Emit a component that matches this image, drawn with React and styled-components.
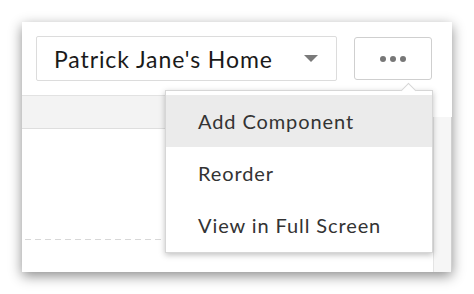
import React from 'react';
import styled, { createGlobalStyle } from 'styled-components';

const GlobalStyle = createGlobalStyle`
    html, body {
        margin: 0;
        padding: 0;
        background: #ffffff;
    }

    body {
        font-family: Lato, "Liberation Sans", sans-serif;
    }
`;

const Page = styled.div`
    width: 474px;
    height: 294px;
    padding: 22px;
    box-sizing: border-box;
    background: #ffffff;
`;

const Panel = styled.div`
    position: relative;
    width: 430px;
    height: 250px;
    display: flex;
    flex-direction: column;
    background: #ffffff;
    box-shadow: 0px 4px 12px rgba(0, 0, 0, 0.45);
`;

const Header = styled.div`
    display: flex;
    align-items: center;
    gap: 17px;
    height: 73px;
    padding: 0 20px 0 14px;
    box-sizing: border-box;
`;

const Select = styled.div`
    display: flex;
    align-items: center;
    justify-content: space-between;
    width: 301px;
    height: 45px;
    padding: 0 18px 0 17px;
    box-sizing: border-box;
    border: 1px solid #dcdcdc;
    border-radius: 2px;
    background: #ffffff;

    font-size: 23px;
    letter-spacing: 0.9px;
    color: #1a1a1a;
`;

const Caret = styled.span`
    width: 0;
    height: 0;
    border-left: 7px solid transparent;
    border-right: 7px solid transparent;
    border-top: 7px solid #7a7a7a;
`;

const MoreButton = styled.div`
    display: flex;
    align-items: center;
    justify-content: center;
    gap: 4px;
    width: 78px;
    height: 43px;
    box-sizing: border-box;
    border: 1px solid #cfcfcf;
    border-radius: 3px;
    background: #ffffff;
`;

const Dot = styled.span`
    width: 6px;
    height: 6px;
    border-radius: 50%;
    background: #777777;
`;

const Body = styled.div`
    flex: 1;
    display: flex;
`;

const Main = styled.div`
    flex: 1;
    display: flex;
    flex-direction: column;
`;

const Band = styled.div`
    height: 34px;
    box-sizing: border-box;
    background: #f3f3f3;
    border-top: 1px solid #e2e2e2;
    border-bottom: 1px solid #dedede;
`;

const Content = styled.div`
    flex: 1;
    padding: 110px 0 0 3px;
`;

const Dashed = styled.div`
    height: 1px;
    background: repeating-linear-gradient(to right, #d8d8d8 0 6px, transparent 6px 10px);
`;

const Scrollbar = styled.div`
    width: 19px;
    box-sizing: border-box;
    margin-top: 22px;
    background: #f6f6f6;
    border-left: 1px solid #e4e4e4;
    border-right: 1px solid #d0d0d0;
`;

const Menu = styled.div`
    position: absolute;
    left: 143px;
    top: 68px;
    width: 268px;
    height: 163px;
    padding-top: 4px;
    box-sizing: border-box;
    background: #ffffff;
    border: 1px solid #d6d6d6;
    box-shadow: 0px 2px 6px rgba(0, 0, 0, 0.25);

    &::before {
        content: '';
        position: absolute;
        top: -6px;
        left: 237px;
        width: 10px;
        height: 10px;
        background: #ffffff;
        border-left: 1px solid #d6d6d6;
        border-top: 1px solid #d6d6d6;
        transform: rotate(45deg);
    }
`;

const MenuItem = styled.div`
    position: relative;
    display: flex;
    align-items: center;
    height: 52px;
    padding-left: 32px;
    background: ${props => (props.active ? '#ebebeb' : 'transparent')};

    font-size: 20px;
    letter-spacing: 0.9px;
    color: #333333;
`;

export default function App() {
    return (
        <Page>
            <GlobalStyle />
            <Panel>
                <Header>
                    <Select>
                        <span>Patrick Jane's Home</span>
                        <Caret />
                    </Select>
                    <MoreButton>
                        <Dot />
                        <Dot />
                        <Dot />
                    </MoreButton>
                </Header>
                <Body>
                    <Main>
                        <Band />
                        <Content>
                            <Dashed />
                        </Content>
                    </Main>
                    <Scrollbar />
                </Body>
                <Menu>
                    <MenuItem active>Add Component</MenuItem>
                    <MenuItem>Reorder</MenuItem>
                    <MenuItem>View in Full Screen</MenuItem>
                </Menu>
            </Panel>
        </Page>
    );
}
